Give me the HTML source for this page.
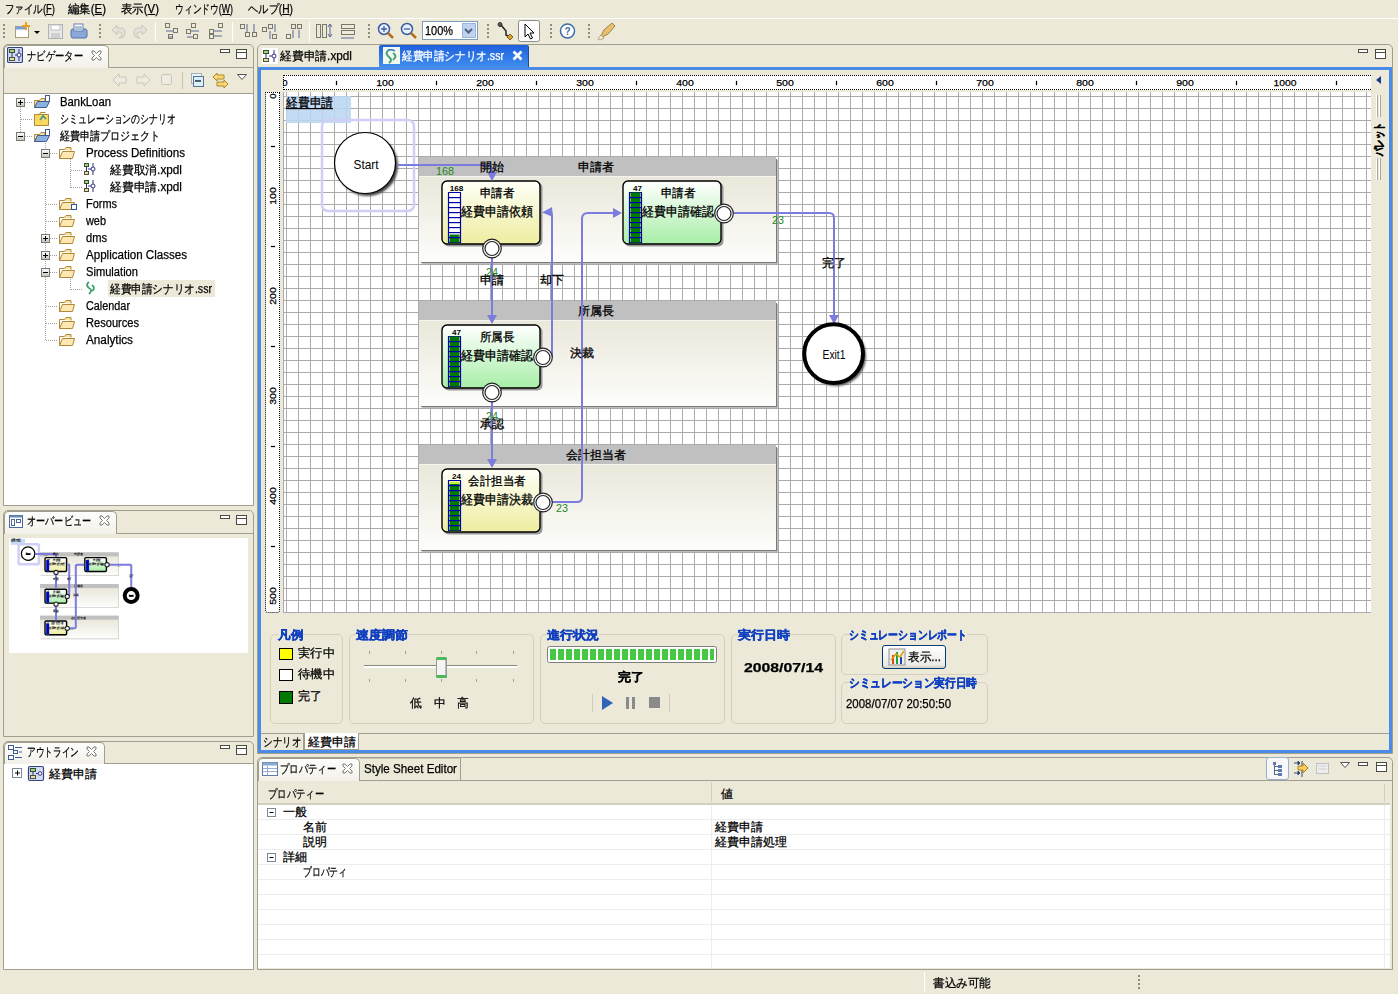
<!DOCTYPE html><html lang="ja"><head>
<meta charset="utf-8">
<style>
*{box-sizing:border-box;margin:0;padding:0}
html,body{width:1398px;height:994px;overflow:hidden;background:#ECE9D8;font-family:"Liberation Sans",sans-serif;font-size:12px;color:#000}
.a{position:absolute}
.t{position:absolute;white-space:nowrap;line-height:12px;height:12px;-webkit-text-stroke-width:0.25px}
.t>span{display:inline-block;transform-origin:0 0}
.panel{position:absolute;border:1px solid #A09F8F;border-radius:5px 5px 0 0;background:#ECE9D8}
.vtab{position:absolute;border:1px solid #A09F8F;border-bottom:none;border-radius:5px 5px 0 0;background:linear-gradient(#FDFDFB,#F3F1E9)}
.sep{position:absolute;width:1px;background:#C5C2B2;border-right:1px solid #fff}
.grip{position:absolute;width:2px;background:repeating-linear-gradient(#8F8C7E 0 2px,transparent 2px 4px)}
.wh{position:absolute;background:#fff}
.mn{position:absolute;width:10px;height:4px;border:1px solid #4A4A40;background:#fff}
.mx{position:absolute;width:11px;height:10px;border:1px solid #4A4A40;background:#fff;box-shadow:inset 0 2px 0 #fff,inset 0 3px 0 #4A4A40}
.gb{position:absolute;border:1px solid #D3D0C0;border-radius:5px}
.gt{color:#1040C0;font-weight:bold;background:#ECE9D8;-webkit-text-stroke-width:0.4px}
.row{position:absolute;left:0;width:100%;height:1px;background:#EDEDED}
</style>
</head>
<body>
<!-- ===== MENU ===== -->
<div class="a" style="left:0;top:18px;width:1398px;height:1px;background:#fff"></div>
<div class="t" style="left:5px;top:3px;width:50px"><span style="transform: scaleX(0.7893);">ファイル(<u>F</u>)</span></div>
<div class="t" style="left:68px;top:3px;width:38px"><span style="transform: scaleX(0.9496);">編集(<u>E</u>)</span></div>
<div class="t" style="left:121px;top:3px;width:38px"><span style="transform: scaleX(0.9496);">表示(<u>V</u>)</span></div>
<div class="t" style="left:175px;top:3px;width:58px"><span style="transform: scaleX(0.7311);">ウィンドウ(<u>W</u>)</span></div>
<div class="t" style="left:248px;top:3px;width:45px"><span style="transform: scaleX(0.8543);">ヘルプ(<u>H</u>)</span></div>

<!-- ===== TOOLBAR ===== -->
<div class="grip" style="left:3px;top:24px;height:14px"></div>
<svg class="a" style="left:0;top:19px" width="640" height="25" viewBox="0 19 640 25">
 <!-- new -->
 <rect x="15.5" y="26.5" width="13" height="11" fill="#fff" stroke="#A8A070"></rect>
 <rect x="15.5" y="26.5" width="10" height="3" fill="#7AA0E0" stroke="none"></rect>
 <path d="M26 22 v8 M22 26 h8" stroke="#E8A020" stroke-width="2"></path>
 <path d="M34 31 h6 l-3 3z" fill="#000"></path>
 <!-- save disabled -->
 <rect x="48.5" y="24.5" width="14" height="14" fill="#E8E8E8" stroke="#B0B0B0"></rect>
 <rect x="51" y="25" width="9" height="5" fill="#fff" stroke="#C0C0C0"></rect>
 <rect x="51" y="33" width="9" height="5" fill="#D0D0D0"></rect>
 <!-- print -->
 <rect x="71" y="29" width="16" height="9" rx="2" fill="#8AA8D8" stroke="#5070A8"></rect>
 <rect x="74" y="24" width="9" height="7" fill="#fff" stroke="#6080B0"></rect>
 <path d="M75 27h7M75 29h7" stroke="#6080B0"></path>
 <!-- undo/redo disabled -->
 <path d="M112 30 l5-5 v3 h4 q4 0 4 5 q0 4-4 5 h-2 q3-1 3-4 q0-2-3-2 h-2 v3z" fill="#E4E2D8" stroke="#C8C6BC"></path>
 <path d="M147 30 l-5-5 v3 h-4 q-4 0-4 5 q0 4 4 5 h2 q-3-1-3-4 q0-2 3-2 h2 v3z" fill="#E4E2D8" stroke="#C8C6BC"></path>
</svg>
<div class="grip" style="left:99px;top:24px;height:14px"></div>
<div class="sep" style="left:155px;top:22px;height:20px"></div>
<div class="sep" style="left:232px;top:22px;height:20px"></div>
<div class="sep" style="left:309px;top:22px;height:20px"></div>
<svg class="a" style="left:160px;top:19px" width="210" height="25" viewBox="160 19 210 25">
 <g fill="none" stroke="#7A786C" stroke-width="1">
 <!-- align icons group 1 -->
 <rect x="165.5" y="23.5" width="4" height="4"></rect><rect x="173.5" y="28.5" width="4" height="4"></rect><rect x="168.5" y="34.5" width="4" height="4"></rect>
 <path d="M166 31h7M169 37h4" stroke="#5A6898"></path>
 <rect x="191.5" y="23.5" width="4" height="4"></rect><rect x="186.5" y="29.5" width="4" height="4"></rect><rect x="193.5" y="34.5" width="4" height="4"></rect>
 <path d="M191 31h8M187 37h6" stroke="#5A6898"></path>
 <rect x="218.5" y="23.5" width="4" height="4"></rect><rect x="209.5" y="29.5" width="4" height="4"></rect><rect x="209.5" y="34.5" width="4" height="4"></rect>
 <path d="M214 31h8M214 36h8" stroke="#5A6898"></path>
 <!-- group 2 -->
 <rect x="240.5" y="24.5" width="4" height="4"></rect><rect x="245.5" y="32.5" width="4" height="4"></rect><rect x="252.5" y="32.5" width="4" height="4"></rect>
 <path d="M247 24v8M254 24v8" stroke="#5A6898"></path>
 <rect x="262.5" y="27.5" width="4" height="4"></rect><rect x="268.5" y="24.5" width="4" height="4"></rect><rect x="272.5" y="34.5" width="4" height="4"></rect>
 <path d="M270 31v8M275 24v8" stroke="#5A6898"></path>
 <rect x="286.5" y="34.5" width="4" height="4"></rect><rect x="291.5" y="24.5" width="4" height="4"></rect><rect x="297.5" y="24.5" width="4" height="4"></rect>
 <path d="M293 30v8M299 30v8" stroke="#5A6898"></path>
 <!-- group 3 -->
 <rect x="316.5" y="24.5" width="4" height="13"></rect><rect x="322.5" y="24.5" width="4" height="13"></rect>
 <path d="M330 24v13M328 27l2-3 2 3M328 34l2 3 2-3" stroke="#5A6898"></path>
 <rect x="341.5" y="24.5" width="13" height="4"></rect><rect x="341.5" y="30.5" width="13" height="4"></rect>
 <path d="M341 38h13" stroke="#5A6898"></path>
 </g>
</svg>
<div class="grip" style="left:368px;top:24px;height:14px"></div>
<svg class="a" style="left:370px;top:19px" width="270" height="25" viewBox="370 19 270 25">
 <!-- zoom in -->
 <circle cx="384" cy="29" r="5.5" fill="#E8F0FF" stroke="#3A5AA0" stroke-width="1.5"></circle>
 <path d="M381 29h6M384 26v6" stroke="#3A5AA0" stroke-width="1.3"></path>
 <path d="M388 33l5 5" stroke="#B07020" stroke-width="2.5"></path>
 <!-- zoom out -->
 <circle cx="407" cy="29" r="5.5" fill="#E8F0FF" stroke="#3A5AA0" stroke-width="1.5"></circle>
 <path d="M404 29h6" stroke="#3A5AA0" stroke-width="1.3"></path>
 <path d="M411 33l5 5" stroke="#B07020" stroke-width="2.5"></path>
 <!-- combo -->
 <rect x="422.5" y="21.5" width="55" height="18" fill="#fff" stroke="#7F9DB9"></rect>
 <rect x="462.5" y="23.5" width="13" height="14" fill="#C1D2EE" stroke="#98B4E0"></rect>
 <path d="M465 29l3.5 3.5 3.5-3.5" stroke="#4D6185" stroke-width="2" fill="none"></path>
 <!-- connection tool -->
 <circle cx="500" cy="24.5" r="2" fill="#555" stroke="#333"></circle>
 <path d="M501 25l5 6v4l5 3" stroke="#222" stroke-width="1.5" fill="none"></path>
 <path d="M510 34l3 3-3 3-3-3z" fill="#D8A030" stroke="#806020"></path>
 <!-- select pressed -->
 <rect x="518.5" y="20.5" width="21" height="21" rx="2" fill="#FCFCFC" stroke="#8C8C8C"></rect>
 <path d="M525 24v13l3-3 2.5 5 2-1-2.5-5h4z" fill="#fff" stroke="#000"></path>
 <!-- help -->
 <circle cx="567.5" cy="31" r="7" fill="#fff" stroke="#3E6CA8" stroke-width="1.5"></circle>
 <text x="567.5" y="35" font-size="10" font-weight="bold" text-anchor="middle" fill="#3E6CA8" font-family="Liberation Sans">?</text>
 <!-- flashlight -->
 <path d="M600 38l4-8 8-7 3 3-7 8z" fill="#E8C070" stroke="#A08040"></path>
 <path d="M598 39l3-4 3 3-4 2z" fill="#F8F0E0" stroke="#B0A080"></path>
</svg>
<div class="t" style="left:425px;top:25px;width:28px"><span style="transform: scaleX(0.912);">100%</span></div>
<div class="grip" style="left:487px;top:24px;height:14px"></div>
<div class="grip" style="left:550px;top:24px;height:14px"></div>
<div class="grip" style="left:588px;top:24px;height:14px"></div>
<!-- ===== NAVIGATOR ===== -->
<div class="panel" style="left:3px;top:44px;width:251px;height:462px"></div>
<div class="a" style="left:4px;top:67px;width:249px;height:1px;background:#A09F8F"></div>
<div class="vtab" style="left:4px;top:45px;width:105px;height:23px;border-color:#A09F8F"></div>
<div class="a" style="left:5px;top:66px;width:103px;height:2px;background:#F3F1E9"></div>
<svg class="a" style="left:7px;top:47px" width="16" height="17" viewBox="0 0 16 17">
 <rect x="0.5" y="0.5" width="15" height="15" rx="1.5" fill="#D4DCF4" stroke="#34427E" stroke-width="1.2"></rect>
 <rect x="2.5" y="2.5" width="5" height="3" fill="#A8D080" stroke="#305030"></rect>
 <rect x="2.5" y="10.5" width="5" height="3" fill="#E0E0B0" stroke="#505030"></rect>
 <path d="M5 6v4M8 8h3" stroke="#303080"></path>
 <circle cx="12" cy="8" r="2" fill="#fff" stroke="#303080"></circle>
 <path d="M12 2v4M12 10v4" stroke="#303080"></path>
</svg>
<div class="t" style="left:27px;top:50px;width:56px"><span style="transform: scaleX(0.7778);">ナビゲーター</span></div>
<svg class="a" style="left:91px;top:50px" width="11" height="11" viewBox="0 0 11 11"><path d="M1 1l2-0 2.5 2.5 2.5-2.5 2 0 0 2-2.5 2.5 2.5 2.5 0 2-2 0-2.5-2.5-2.5 2.5-2 0 0-2 2.5-2.5-2.5-2.5z" fill="#fff" stroke="#777"></path></svg>
<div class="mn" style="left:220px;top:49px"></div>
<div class="mx" style="left:236px;top:49px"></div>
<!-- view toolbar -->
<svg class="a" style="left:110px;top:70px" width="140" height="20" viewBox="110 70 140 20">
 <path d="M113 80l6-6v3h7v6h-7v3z" fill="#EDEBE2" stroke="#C9C6B8"></path>
 <path d="M150 80l-6-6v3h-7v6h7v3z" fill="#EDEBE2" stroke="#C9C6B8"></path>
 <rect x="161.5" y="74.5" width="10" height="10" rx="2" fill="#EDEBE2" stroke="#C9C6B8"></rect>
 <path d="M182.5 72v17" stroke="#C5C2B2"></path>
 <rect x="191.5" y="73.5" width="10" height="10" fill="#E8F4FC" stroke="#A0B0C0"></rect>
 <rect x="193.5" y="76.5" width="10" height="10" fill="#D8F0FC" stroke="#5A7090"></rect>
 <path d="M195 81h6" stroke="#203040" stroke-width="1.5"></path>
 <path d="M213 77l4-4v2h7v4h-7v2z" fill="#F8D878" stroke="#B08820"></path>
 <path d="M228 84l-4-4v2h-7v4h7v2z" fill="#F8D878" stroke="#B08820"></path>
 <path d="M237.5 74.5h9l-4.5 5z" fill="#fff" stroke="#555"></path>
</svg>
<div class="wh" style="left:4px;top:93px;width:249px;height:412px;border-top:1px solid #A09F8F"></div>
<!-- tree lines -->
<svg class="a" style="left:4px;top:93px" width="249" height="260" viewBox="4 93 249 260">
 <defs><linearGradient id="expg" x1="0" y1="0" x2="0" y2="1"><stop offset="0" stop-color="#fff"></stop><stop offset="1" stop-color="#C4C4BC"></stop></linearGradient></defs>
 <g stroke="#A0A0A0" stroke-dasharray="1 1" fill="none"><path d="
M20.5 107V132M25 102.5h8M21 119.5h12M25 136.5h8M45.5 141V341.0M50 153.5h8M46 204.5h12M46 221.5h12M50 238.5h8M50 255.5h8M50 272.5h8M46 306.5h12M46 323.5h12M46 340.5h12M70.5 159V188.0M71 170.5h12M71 187.5h12M70.5 277V290.0M71 289.5h12"></path></g>
 <g fill="url(#expg)" stroke="#7A7A72">
  <rect x="16.5" y="98.5" width="8" height="8"></rect>
  <rect x="16.5" y="132.5" width="8" height="8"></rect>
  <rect x="41.5" y="149.5" width="8" height="8"></rect>
  <rect x="41.5" y="234.5" width="8" height="8"></rect>
  <rect x="41.5" y="251.5" width="8" height="8"></rect>
  <rect x="41.5" y="268.5" width="8" height="8"></rect>
 </g>
 <g fill="#000">
  <rect x="18" y="102" width="5" height="1"></rect>
  <rect x="20" y="100" width="1" height="5"></rect>
  <rect x="18" y="136" width="5" height="1"></rect>
  <rect x="43" y="153" width="5" height="1"></rect>
  <rect x="43" y="238" width="5" height="1"></rect>
  <rect x="45" y="236" width="1" height="5"></rect>
  <rect x="43" y="255" width="5" height="1"></rect>
  <rect x="45" y="253" width="1" height="5"></rect>
  <rect x="43" y="272" width="5" height="1"></rect>
 </g>
</svg>
<!-- selection highlight -->
<div class="a" style="left:108px;top:280px;width:107px;height:17px;background:#ECE9D8"></div>
<!-- tree icons -->
<svg class="a" style="left:4px;top:93px" width="249" height="260" viewBox="4 93 249 260">
 <defs>
  <g id="fold"><path d="M0.5 3.5h5l1.5-2h5v3" fill="#F8E0A0" stroke="#B08838"></path><path d="M0.5 3.5v9h13l2-7h-12l-3 7" fill="#FCE8B0" stroke="#B08838"></path></g>
  <g id="proj"><path d="M0.5 5.5h5l1.5-2h4v9h-10.5z" fill="#F8E0A0" stroke="#B08838"></path><path d="M0.5 12.5l3-6h12l-3 6z" fill="#8CB0E0" stroke="#405C90"></path><rect x="11.5" y="0.5" width="4" height="6" fill="#fff" stroke="#405C90"></rect></g>
  <g id="xpdl"><rect x="0.5" y="1.5" width="4" height="3" fill="#A8D080" stroke="#305030"></rect><rect x="0.5" y="9.5" width="4" height="3" fill="#E0E0B0" stroke="#505030"></rect><path d="M2.5 5v4M4 7h4" stroke="#303080"></path><circle cx="9" cy="7" r="2" fill="#fff" stroke="#303080"></circle><path d="M9 1v4M9 9v4" stroke="#303080"></path></g>
 </defs>
 <use href="#proj" x="34" y="95"></use>
 <g transform="translate(34 111)"><path d="M0.5 3.5h14v11h-14z" fill="#F8D860" stroke="#B08838"></path><path d="M0.5 3.5h5l1-2h5" fill="#F8E0A0" stroke="#B08838"></path><path d="M6 9l3-4 3 3" stroke="#409090" fill="none" stroke-width="1.5"></path></g>
 <use href="#proj" x="34" y="129"></use>
 <use href="#fold" x="59" y="146"></use>
 <use href="#xpdl" x="84" y="162"></use>
 <use href="#xpdl" x="84" y="179"></use>
 <use href="#fold" x="59" y="197"></use>
 <rect x="71.5" y="204.5" width="5" height="5" fill="#fff" stroke="#3050A0"></rect>
 <use href="#fold" x="59" y="214"></use>
 <use href="#fold" x="59" y="231"></use>
 <use href="#fold" x="59" y="248"></use>
 <use href="#fold" x="59" y="265"></use>
 <path d="M89 282q-4 3 0 6q4 2 0 6M92 285q4 3 0 6" stroke="#40A070" fill="none" stroke-width="1.8"></path>
 <use href="#fold" x="59" y="299"></use>
 <use href="#fold" x="59" y="316"></use>
 <use href="#fold" x="59" y="333"></use>
</svg>
<div class="t" style="left:60px;top:96px;width:51px"><span style="transform: scaleX(0.9436);">BankLoan</span></div>
<div class="t" style="left:60px;top:113px;width:116px"><span style="transform: scaleX(0.7436);">シミュレーションのシナリオ</span></div>
<div class="t" style="left:60px;top:130px;width:100px"><span style="transform: scaleX(0.8333);">経費申請プロジェクト</span></div>
<div class="t" style="left:86px;top:147px;width:99px"><span style="transform: scaleX(0.9638);">Process Definitions</span></div>
<div class="t" style="left:110px;top:164px;width:72px"><span style="transform: scaleX(0.9815);">経費取消.xpdl</span></div>
<div class="t" style="left:110px;top:181px;width:72px"><span style="transform: scaleX(0.9815);">経費申請.xpdl</span></div>
<div class="t" style="left:86px;top:198px;width:31px"><span style="transform: scaleX(0.9118);">Forms</span></div>
<div class="t" style="left:86px;top:215px;width:20px"><span style="transform: scaleX(0.9084);">web</span></div>
<div class="t" style="left:86px;top:232px;width:21px"><span style="transform: scaleX(0.9263);">dms</span></div>
<div class="t" style="left:86px;top:249px;width:101px"><span style="transform: scaleX(0.9645);">Application Classes</span></div>
<div class="t" style="left:86px;top:266px;width:52px"><span style="transform: scaleX(0.9281);">Simulation</span></div>
<div class="t" style="left:110px;top:283px;width:102px"><span style="transform: scaleX(0.8843);">経費申請シナリオ.ssr</span></div>
<div class="t" style="left:86px;top:300px;width:44px"><span style="transform: scaleX(0.9034);">Calendar</span></div>
<div class="t" style="left:86px;top:317px;width:53px"><span style="transform: scaleX(0.924);">Resources</span></div>
<div class="t" style="left:86px;top:334px;width:47px"><span style="transform: scaleX(0.9785);">Analytics</span></div>
<!-- ===== OVERVIEW ===== -->
<div class="panel" style="left:3px;top:510px;width:251px;height:227px"></div>
<div class="a" style="left:4px;top:533px;width:249px;height:1px;background:#A09F8F"></div>
<div class="vtab" style="left:4px;top:511px;width:113px;height:23px"></div>
<div class="a" style="left:5px;top:532px;width:111px;height:2px;background:#F3F1E9"></div>
<svg class="a" style="left:9px;top:515px" width="14" height="13" viewBox="0 0 14 13">
 <rect x="0.5" y="0.5" width="13" height="12" fill="#fff" stroke="#4A6A9A"></rect>
 <rect x="0.5" y="0.5" width="13" height="2" fill="#6A8ABA"></rect>
 <rect x="2.5" y="4.5" width="3" height="6" fill="none" stroke="#4A6A9A"></rect>
 <rect x="7.5" y="4.5" width="4" height="3" fill="none" stroke="#4A6A9A"></rect>
</svg>
<div class="t" style="left:27px;top:515px;width:64px"><span style="transform: scaleX(0.7619);">オーバービュー</span></div>
<svg class="a" style="left:99px;top:515px" width="11" height="11" viewBox="0 0 11 11"><path d="M1 1l2-0 2.5 2.5 2.5-2.5 2 0 0 2-2.5 2.5 2.5 2.5 0 2-2 0-2.5-2.5-2.5 2.5-2 0 0-2 2.5-2.5-2.5-2.5z" fill="#fff" stroke="#777"></path></svg>
<div class="mn" style="left:220px;top:515px"></div>
<div class="mx" style="left:236px;top:515px"></div>
<div class="wh" style="left:9px;top:538px;width:239px;height:115px"></div>
<svg class="a" style="left:9px;top:538px" width="239" height="115" viewBox="9 538 239 115" id="ovsvg">
 <g transform="translate(10.7 538.9) scale(0.22) translate(-286 -96)">
  <use href="#diagram"></use>
  <g fill="#0000C8"><rect x="448" y="192" width="12" height="50"></rect><rect x="629" y="192" width="12" height="50"></rect><rect x="448" y="336" width="12" height="50"></rect><rect x="448" y="480" width="12" height="50"></rect></g>
  <path d="M355 165h20M824 355h20" stroke="#000" stroke-width="8"></path>
 </g>
</svg>

<!-- ===== OUTLINE ===== -->
<div class="panel" style="left:3px;top:741px;width:251px;height:229px"></div>
<div class="a" style="left:4px;top:763px;width:249px;height:1px;background:#A09F8F"></div>
<div class="vtab" style="left:4px;top:742px;width:101px;height:22px"></div>
<div class="a" style="left:5px;top:762px;width:99px;height:2px;background:#F3F1E9"></div>
<svg class="a" style="left:8px;top:745px" width="15" height="15" viewBox="0 0 15 15">
 <rect x="0.5" y="0.5" width="5" height="4" fill="#fff" stroke="#3A5A9A"></rect>
 <rect x="5.5" y="5.5" width="4" height="3" fill="#fff" stroke="#3A5A9A"></rect>
 <rect x="0.5" y="10.5" width="5" height="4" fill="#fff" stroke="#3A5A9A"></rect>
 <path d="M7 2.5h7M11 7h3M7 12.5h7" stroke="#3A5A9A"></path>
</svg>
<div class="t" style="left:27px;top:746px;width:52px"><span style="transform: scaleX(0.7222);">アウトライン</span></div>
<svg class="a" style="left:86px;top:746px" width="11" height="11" viewBox="0 0 11 11"><path d="M1 1l2-0 2.5 2.5 2.5-2.5 2 0 0 2-2.5 2.5 2.5 2.5 0 2-2 0-2.5-2.5-2.5 2.5-2 0 0-2 2.5-2.5-2.5-2.5z" fill="#fff" stroke="#777"></path></svg>
<div class="mn" style="left:220px;top:745px"></div>
<div class="mx" style="left:236px;top:745px"></div>
<div class="wh" style="left:4px;top:764px;width:249px;height:205px"></div>
<svg class="a" style="left:10px;top:765px" width="40" height="18" viewBox="10 765 40 18">
 <rect x="12.5" y="768.5" width="9" height="9" fill="#fff" stroke="#7A8A99"></rect>
 <path d="M15 773h5M17.5 770.5v5" stroke="#000"></path>
 <rect x="28.5" y="766.5" width="15" height="14" rx="1.5" fill="#D4DCF4" stroke="#34427E" stroke-width="1.2"></rect>
 <rect x="30.5" y="768.5" width="5" height="3" fill="#A8D080" stroke="#305030"></rect>
 <rect x="30.5" y="775.5" width="5" height="3" fill="#E0E0B0" stroke="#505030"></rect>
 <path d="M33 772v3M36 773.5h3" stroke="#303080"></path>
 <circle cx="40" cy="773.5" r="1.8" fill="#fff" stroke="#303080"></circle>
</svg>
<div class="t" style="left:49px;top:768px;width:48px"><span style="transform: scaleX(1);">経費申請</span></div>
<!-- ===== EDITOR ===== -->
<div class="panel" style="left:257px;top:44px;width:1136px;height:710px"></div>

<div class="a" style="left:379px;top:45px;width:150px;height:23px;border-radius:2px 2px 0 0;background:linear-gradient(#1E5FDC,#3A86EC 80%,#4A90EE);border-right:1px solid #1A4AA0"></div>
<svg class="a" style="left:262px;top:48px" width="16" height="16" viewBox="0 0 16 16">
 <rect x="0" y="0" width="16" height="16" fill="#fff"></rect>
 <rect x="1.5" y="2.5" width="5" height="3" fill="#A8D080" stroke="#305030"></rect><rect x="1.5" y="10.5" width="5" height="3" fill="#E0E0B0" stroke="#505030"></rect>
 <path d="M4 6v4M7 8h3" stroke="#303080"></path><circle cx="12" cy="8" r="2" fill="#fff" stroke="#303080"></circle><path d="M12 2v4M12 10v4" stroke="#303080"></path>
</svg>
<div class="t" style="left:280px;top:50px;width:72px"><span style="transform: scaleX(0.9815);">経費申請.xpdl</span></div>
<svg class="a" style="left:383px;top:47px" width="17" height="17" viewBox="0 0 17 17">
 <rect x="0" y="0" width="17" height="17" fill="#F0F8F0"></rect>
 <path d="M6 3q-5 3 0 7q4 3 0 6M10 6q5 3 0 7" stroke="#40A070" fill="none" stroke-width="2"></path>
 <path d="M5 3q4-1 7 1" stroke="#3070C0" fill="none" stroke-width="1.5"></path>
</svg>
<div class="t" style="left:402px;top:50px;width:102px;color:#fff"><span style="transform: scaleX(0.8843);">経費申請シナリオ.ssr</span></div>
<svg class="a" style="left:512px;top:50px" width="11" height="11" viewBox="0 0 11 11"><path d="M1.5 1.5l8 8M9.5 1.5l-8 8" stroke="#fff" stroke-width="2.6"></path></svg>
<div class="mn" style="left:1358px;top:49px"></div>
<div class="mx" style="left:1375px;top:49px"></div>
<!-- blue frame -->
<div class="a" style="left:258px;top:67px;width:1134px;height:686px;border:3px solid #4A8BE8;border-top-width:3px;background:#ECE9D8"></div>
<!-- rulers -->
<div class="wh" style="left:283px;top:75px;width:1088px;height:15px;border-top:1px dotted #000;border-bottom:1px dotted #000;border-left:1px dotted #000"></div>
<div class="wh" style="left:265px;top:92px;width:15px;height:521px;border-left:1px dotted #000;border-right:1px dotted #000;border-top:1px dotted #000;border-bottom:1px dotted #000;border-radius:0 0 3px 3px"></div>
<!-- canvas -->
<div class="a" style="left:283px;top:92px;width:1088px;height:521px;background-color:#fff;background-image:linear-gradient(90deg,#ABABAB 1px,transparent 1px),linear-gradient(#ABABAB 1px,transparent 1px);background-size:12px 12px;background-position:2px 4px;border-left:1px solid #ABABAB;border-bottom:1px solid #ABABAB"></div>
<svg class="a" style="left:283px;top:76px" width="1088" height="14" viewBox="283 76 1088 14"><g font-family="Liberation Sans" font-size="9.5" text-anchor="middle" fill="#000" stroke="#000" stroke-width="0.25">
<text x="285" y="86">0</text>
<text x="385" y="86" textLength="17.5" lengthAdjust="spacingAndGlyphs">100</text>
<text x="485" y="86" textLength="17.5" lengthAdjust="spacingAndGlyphs">200</text>
<text x="585" y="86" textLength="17.5" lengthAdjust="spacingAndGlyphs">300</text>
<text x="685" y="86" textLength="17.5" lengthAdjust="spacingAndGlyphs">400</text>
<text x="785" y="86" textLength="17.5" lengthAdjust="spacingAndGlyphs">500</text>
<text x="885" y="86" textLength="17.5" lengthAdjust="spacingAndGlyphs">600</text>
<text x="985" y="86" textLength="17.5" lengthAdjust="spacingAndGlyphs">700</text>
<text x="1085" y="86" textLength="17.5" lengthAdjust="spacingAndGlyphs">800</text>
<text x="1185" y="86" textLength="17.5" lengthAdjust="spacingAndGlyphs">900</text>
<text x="1285" y="86" textLength="23" lengthAdjust="spacingAndGlyphs">1000</text>
<rect x="336" y="81" width="1" height="4"></rect>
<rect x="436" y="81" width="1" height="4"></rect>
<rect x="536" y="81" width="1" height="4"></rect>
<rect x="636" y="81" width="1" height="4"></rect>
<rect x="736" y="81" width="1" height="4"></rect>
<rect x="836" y="81" width="1" height="4"></rect>
<rect x="936" y="81" width="1" height="4"></rect>
<rect x="1036" y="81" width="1" height="4"></rect>
<rect x="1136" y="81" width="1" height="4"></rect>
<rect x="1236" y="81" width="1" height="4"></rect>
<rect x="1336" y="81" width="1" height="4"></rect>
</g></svg>
<svg class="a" style="left:266px;top:93px" width="14" height="520" viewBox="266 93 14 520"><g font-family="Liberation Sans" font-size="9.5" text-anchor="middle" fill="#000" stroke="#000" stroke-width="0.25">
<text transform="translate(276 96) rotate(-90)" x="0" y="0">0</text>
<text transform="translate(276 196) rotate(-90)" x="0" y="0" textLength="17.5" lengthAdjust="spacingAndGlyphs">100</text>
<text transform="translate(276 296) rotate(-90)" x="0" y="0" textLength="17.5" lengthAdjust="spacingAndGlyphs">200</text>
<text transform="translate(276 396) rotate(-90)" x="0" y="0" textLength="17.5" lengthAdjust="spacingAndGlyphs">300</text>
<text transform="translate(276 496) rotate(-90)" x="0" y="0" textLength="17.5" lengthAdjust="spacingAndGlyphs">400</text>
<text transform="translate(276 596) rotate(-90)" x="0" y="0" textLength="17.5" lengthAdjust="spacingAndGlyphs">500</text>
<rect x="271" y="146" width="4" height="1"></rect>
<rect x="271" y="246" width="4" height="1"></rect>
<rect x="271" y="346" width="4" height="1"></rect>
<rect x="271" y="446" width="4" height="1"></rect>
<rect x="271" y="546" width="4" height="1"></rect>
<rect x="271" y="646" width="4" height="1"></rect>
</g></svg>
<svg class="a" style="left:283px;top:92px" width="1088" height="521" viewBox="283 92 1088 521">
<defs>
<linearGradient id="lane" x1="0" y1="0" x2="0" y2="1"><stop offset="0" stop-color="#E6E3D3"></stop><stop offset="1" stop-color="#FDFDFB"></stop></linearGradient>
<linearGradient id="yel" x1="0" y1="0" x2="0" y2="1"><stop offset="0" stop-color="#FFFFF8"></stop><stop offset="1" stop-color="#EDEDA0"></stop></linearGradient>
<linearGradient id="grn" x1="0" y1="0" x2="0" y2="1"><stop offset="0" stop-color="#FFFFFF"></stop><stop offset="1" stop-color="#A8EEA8"></stop></linearGradient>
<filter id="blur1" x="-20%" y="-20%" width="140%" height="140%"><feGaussianBlur stdDeviation="1"></feGaussianBlur></filter><filter id="blur05" x="-20%" y="-20%" width="140%" height="140%"><feGaussianBlur stdDeviation="0.6"></feGaussianBlur></filter>
</defs>
<g id="diagram" stroke-linejoin="round">
<rect x="286" y="96" width="65" height="27" fill="#BCD6F2" fill-opacity="0.88"></rect>
<text stroke="#000" stroke-width="0.3" x="286" y="107" font-size="12.5" font-family="Liberation Sans" textLength="47" lengthAdjust="spacingAndGlyphs">経費申請</text>
<rect x="286" y="108" width="47" height="1.2" fill="#000"></rect>
<rect x="322" y="120" width="92" height="91" rx="6" fill="none" stroke="#CFCFF6" stroke-width="2.5" vector-effect="non-scaling-stroke"></rect>
<circle cx="367.5" cy="165.5" r="30.5" fill="#444" filter="url(#blur1)"></circle>
<circle cx="365" cy="163" r="30.5" fill="#fff" stroke="#000" stroke-width="1.2" vector-effect="non-scaling-stroke"></circle>
<text x="366" y="169" font-size="12" font-family="Liberation Sans" text-anchor="middle" textLength="25" lengthAdjust="spacingAndGlyphs">Start</text>
<rect x="419" y="157" width="357" height="105" fill="url(#lane)"></rect>
<rect x="776" y="159" width="1" height="104" fill="#7A7A7A"></rect><rect x="421" y="262" width="356" height="1" fill="#7A7A7A"></rect>
<rect x="777" y="160" width="1" height="104" fill="#BDBDBD"></rect><rect x="422" y="263" width="356" height="1" fill="#BDBDBD"></rect>
<rect x="419" y="157" width="357" height="19" fill="#C0C0C0"></rect>
<rect x="419" y="176" width="357" height="1" fill="#F4F4F0"></rect>
<text stroke="#000" stroke-width="0.3" x="596" y="171" font-size="12" font-family="Liberation Sans" text-anchor="middle">申請者</text>
<rect x="419" y="301" width="357" height="105" fill="url(#lane)"></rect>
<rect x="776" y="303" width="1" height="104" fill="#7A7A7A"></rect><rect x="421" y="406" width="356" height="1" fill="#7A7A7A"></rect>
<rect x="777" y="304" width="1" height="104" fill="#BDBDBD"></rect><rect x="422" y="407" width="356" height="1" fill="#BDBDBD"></rect>
<rect x="419" y="301" width="357" height="19" fill="#C0C0C0"></rect>
<rect x="419" y="320" width="357" height="1" fill="#F4F4F0"></rect>
<text stroke="#000" stroke-width="0.3" x="596" y="315" font-size="12" font-family="Liberation Sans" text-anchor="middle">所属長</text>
<rect x="419" y="445" width="357" height="105" fill="url(#lane)"></rect>
<rect x="776" y="447" width="1" height="104" fill="#7A7A7A"></rect><rect x="421" y="550" width="356" height="1" fill="#7A7A7A"></rect>
<rect x="777" y="448" width="1" height="104" fill="#BDBDBD"></rect><rect x="422" y="551" width="356" height="1" fill="#BDBDBD"></rect>
<rect x="419" y="445" width="357" height="19" fill="#C0C0C0"></rect>
<rect x="419" y="464" width="357" height="1" fill="#F4F4F0"></rect>
<text stroke="#000" stroke-width="0.3" x="596" y="459" font-size="12" font-family="Liberation Sans" text-anchor="middle">会計担当者</text>
<rect x="443.5" y="182.5" width="99" height="64" rx="5" fill="#9A9A9A" filter="url(#blur05)"></rect>
<rect x="442" y="181" width="98" height="63" rx="5" fill="url(#yel)" stroke="#000" stroke-width="1.4" vector-effect="non-scaling-stroke"></rect>
<rect x="448.5" y="192.5" width="12" height="50" fill="#fff" stroke="#0000A8" stroke-width="1.2"></rect>
<rect x="449.5" y="234.5" width="10" height="8.0" fill="#007A00"></rect>
<rect x="448.5" y="197.0" width="12" height="1.2" fill="#0000A8"></rect>
<rect x="448.5" y="202.0" width="12" height="1.2" fill="#0000A8"></rect>
<rect x="448.5" y="207.0" width="12" height="1.2" fill="#0000A8"></rect>
<rect x="448.5" y="212.0" width="12" height="1.2" fill="#0000A8"></rect>
<rect x="448.5" y="217.0" width="12" height="1.2" fill="#0000A8"></rect>
<rect x="448.5" y="222.0" width="12" height="1.2" fill="#0000A8"></rect>
<rect x="448.5" y="227.0" width="12" height="1.2" fill="#0000A8"></rect>
<rect x="448.5" y="232.0" width="12" height="1.2" fill="#0000A8"></rect>
<rect x="448.5" y="237.0" width="12" height="1.2" fill="#0000A8"></rect>
<text x="456.5" y="190.5" font-size="8" font-weight="bold" font-family="Liberation Sans" text-anchor="middle" textLength="13.5" lengthAdjust="spacingAndGlyphs">168</text>
<text stroke="#000" stroke-width="0.3" x="497" y="196.5" font-size="12" font-family="Liberation Sans" text-anchor="middle" textLength="34.5" lengthAdjust="spacingAndGlyphs">申請者</text>
<text stroke="#000" stroke-width="0.3" x="497" y="215.5" font-size="12.5" font-family="Liberation Sans" text-anchor="middle" textLength="72" lengthAdjust="spacingAndGlyphs">経費申請依頼</text>
<rect x="624.5" y="182.5" width="99" height="64" rx="5" fill="#9A9A9A" filter="url(#blur05)"></rect>
<rect x="623" y="181" width="98" height="63" rx="5" fill="url(#grn)" stroke="#000" stroke-width="1.4" vector-effect="non-scaling-stroke"></rect>
<rect x="629.5" y="192.5" width="12" height="50" fill="#fff" stroke="#0000A8" stroke-width="1.2"></rect>
<rect x="630.5" y="192.5" width="10" height="50" fill="#007A00"></rect>
<rect x="629.5" y="197.0" width="12" height="1.2" fill="#0000A8"></rect>
<rect x="629.5" y="202.0" width="12" height="1.2" fill="#0000A8"></rect>
<rect x="629.5" y="207.0" width="12" height="1.2" fill="#0000A8"></rect>
<rect x="629.5" y="212.0" width="12" height="1.2" fill="#0000A8"></rect>
<rect x="629.5" y="217.0" width="12" height="1.2" fill="#0000A8"></rect>
<rect x="629.5" y="222.0" width="12" height="1.2" fill="#0000A8"></rect>
<rect x="629.5" y="227.0" width="12" height="1.2" fill="#0000A8"></rect>
<rect x="629.5" y="232.0" width="12" height="1.2" fill="#0000A8"></rect>
<rect x="629.5" y="237.0" width="12" height="1.2" fill="#0000A8"></rect>
<text x="637.5" y="190.5" font-size="8" font-weight="bold" font-family="Liberation Sans" text-anchor="middle" textLength="9.0" lengthAdjust="spacingAndGlyphs">47</text>
<text stroke="#000" stroke-width="0.3" x="678" y="196.5" font-size="12" font-family="Liberation Sans" text-anchor="middle" textLength="34.5" lengthAdjust="spacingAndGlyphs">申請者</text>
<text stroke="#000" stroke-width="0.3" x="678" y="215.5" font-size="12.5" font-family="Liberation Sans" text-anchor="middle" textLength="72" lengthAdjust="spacingAndGlyphs">経費申請確認</text>
<rect x="443.5" y="326.5" width="99" height="64" rx="5" fill="#9A9A9A" filter="url(#blur05)"></rect>
<rect x="442" y="325" width="98" height="63" rx="5" fill="url(#grn)" stroke="#000" stroke-width="1.4" vector-effect="non-scaling-stroke"></rect>
<rect x="448.5" y="336.5" width="12" height="50" fill="#fff" stroke="#0000A8" stroke-width="1.2"></rect>
<rect x="449.5" y="336.5" width="10" height="50" fill="#007A00"></rect>
<rect x="448.5" y="341.0" width="12" height="1.2" fill="#0000A8"></rect>
<rect x="448.5" y="346.0" width="12" height="1.2" fill="#0000A8"></rect>
<rect x="448.5" y="351.0" width="12" height="1.2" fill="#0000A8"></rect>
<rect x="448.5" y="356.0" width="12" height="1.2" fill="#0000A8"></rect>
<rect x="448.5" y="361.0" width="12" height="1.2" fill="#0000A8"></rect>
<rect x="448.5" y="366.0" width="12" height="1.2" fill="#0000A8"></rect>
<rect x="448.5" y="371.0" width="12" height="1.2" fill="#0000A8"></rect>
<rect x="448.5" y="376.0" width="12" height="1.2" fill="#0000A8"></rect>
<rect x="448.5" y="381.0" width="12" height="1.2" fill="#0000A8"></rect>
<text x="456.5" y="334.5" font-size="8" font-weight="bold" font-family="Liberation Sans" text-anchor="middle" textLength="9.0" lengthAdjust="spacingAndGlyphs">47</text>
<text stroke="#000" stroke-width="0.3" x="497" y="340.5" font-size="12" font-family="Liberation Sans" text-anchor="middle" textLength="34.5" lengthAdjust="spacingAndGlyphs">所属長</text>
<text stroke="#000" stroke-width="0.3" x="497" y="359.5" font-size="12.5" font-family="Liberation Sans" text-anchor="middle" textLength="72" lengthAdjust="spacingAndGlyphs">経費申請確認</text>
<rect x="443.5" y="470.5" width="99" height="64" rx="5" fill="#9A9A9A" filter="url(#blur05)"></rect>
<rect x="442" y="469" width="98" height="63" rx="5" fill="url(#yel)" stroke="#000" stroke-width="1.4" vector-effect="non-scaling-stroke"></rect>
<rect x="448.5" y="480.5" width="12" height="50" fill="#fff" stroke="#0000A8" stroke-width="1.2"></rect>
<rect x="449.5" y="483.0" width="10" height="47.5" fill="#007A00"></rect>
<rect x="449.5" y="481.5" width="10" height="2.5" fill="#C8F040"></rect>
<rect x="448.5" y="485.0" width="12" height="1.2" fill="#0000A8"></rect>
<rect x="448.5" y="490.0" width="12" height="1.2" fill="#0000A8"></rect>
<rect x="448.5" y="495.0" width="12" height="1.2" fill="#0000A8"></rect>
<rect x="448.5" y="500.0" width="12" height="1.2" fill="#0000A8"></rect>
<rect x="448.5" y="505.0" width="12" height="1.2" fill="#0000A8"></rect>
<rect x="448.5" y="510.0" width="12" height="1.2" fill="#0000A8"></rect>
<rect x="448.5" y="515.0" width="12" height="1.2" fill="#0000A8"></rect>
<rect x="448.5" y="520.0" width="12" height="1.2" fill="#0000A8"></rect>
<rect x="448.5" y="525.0" width="12" height="1.2" fill="#0000A8"></rect>
<text x="456.5" y="478.5" font-size="8" font-weight="bold" font-family="Liberation Sans" text-anchor="middle" textLength="9.0" lengthAdjust="spacingAndGlyphs">24</text>
<text stroke="#000" stroke-width="0.3" x="497" y="484.5" font-size="12" font-family="Liberation Sans" text-anchor="middle" textLength="57.5" lengthAdjust="spacingAndGlyphs">会計担当者</text>
<text stroke="#000" stroke-width="0.3" x="497" y="503.5" font-size="12.5" font-family="Liberation Sans" text-anchor="middle" textLength="72" lengthAdjust="spacingAndGlyphs">経費申請決裁</text>
<path d="M398 165 H487 Q492 165 492 170 V178" stroke="#7C7CDE" stroke-width="2" fill="none" vector-effect="non-scaling-stroke"></path>
<path d="M487 172 L492 181 L497 172z" fill="#7C7CDE"></path>
<path d="M492 257 V322" stroke="#7C7CDE" stroke-width="2" fill="none" vector-effect="non-scaling-stroke"></path>
<path d="M487 315 L492 324 L497 315z" fill="#7C7CDE"></path>
<path d="M552 357 V216 Q552 212 548 212" stroke="#7C7CDE" stroke-width="2" fill="none" vector-effect="non-scaling-stroke"></path>
<path d="M542 212.5 L552 207 L553 217z" fill="#7C7CDE"></path>
<path d="M492 401 V466" stroke="#7C7CDE" stroke-width="2" fill="none" vector-effect="non-scaling-stroke"></path>
<path d="M487 459 L492 468 L497 459z" fill="#7C7CDE"></path>
<path d="M552 502 H577 Q582 502 582 497 V219 Q582 213 588 213 H620" stroke="#7C7CDE" stroke-width="2" fill="none" vector-effect="non-scaling-stroke"></path>
<path d="M613 208 L622 213 L613 218z" fill="#7C7CDE"></path>
<path d="M733 213 H829 Q834 213 834 218 V322" stroke="#7C7CDE" stroke-width="2" fill="none" vector-effect="non-scaling-stroke"></path>
<path d="M829 315 L834 324 L839 315z" fill="#7C7CDE"></path>
<circle cx="492" cy="248.5" r="9.3" fill="#fff" stroke="#222" stroke-width="1.2" vector-effect="non-scaling-stroke"></circle>
<circle cx="492" cy="248.5" r="7" fill="#fff" stroke="#222" stroke-width="1.2"></circle>
<circle cx="724" cy="213.5" r="9.3" fill="#fff" stroke="#222" stroke-width="1.2" vector-effect="non-scaling-stroke"></circle>
<circle cx="724" cy="213.5" r="7" fill="#fff" stroke="#222" stroke-width="1.2"></circle>
<circle cx="543" cy="357.5" r="9.3" fill="#fff" stroke="#222" stroke-width="1.2" vector-effect="non-scaling-stroke"></circle>
<circle cx="543" cy="357.5" r="7" fill="#fff" stroke="#222" stroke-width="1.2"></circle>
<circle cx="492" cy="392.5" r="9.3" fill="#fff" stroke="#222" stroke-width="1.2" vector-effect="non-scaling-stroke"></circle>
<circle cx="492" cy="392.5" r="7" fill="#fff" stroke="#222" stroke-width="1.2"></circle>
<circle cx="543" cy="502.5" r="9.3" fill="#fff" stroke="#222" stroke-width="1.2" vector-effect="non-scaling-stroke"></circle>
<circle cx="543" cy="502.5" r="7" fill="#fff" stroke="#222" stroke-width="1.2"></circle>
<circle cx="836" cy="356" r="30" fill="#555" filter="url(#blur1)"></circle>
<circle cx="833.6" cy="353.6" r="29.4" fill="#fff" stroke="#000" stroke-width="4" vector-effect="non-scaling-stroke"></circle>
<text x="834" y="359" font-size="12" font-family="Liberation Sans" text-anchor="middle" textLength="23" lengthAdjust="spacingAndGlyphs">Exit1</text>
<text stroke="#000" stroke-width="0.3" x="492" y="171" font-size="12" font-family="Liberation Sans" text-anchor="middle" fill="#000" textLength="24" lengthAdjust="spacingAndGlyphs">開始</text>
<text x="445" y="175" font-size="11" font-family="Liberation Sans" text-anchor="middle" fill="#1E8A1E" textLength="18" lengthAdjust="spacingAndGlyphs">168</text>
<text x="492" y="276" font-size="11" font-family="Liberation Sans" text-anchor="middle" fill="#1E8A1E" textLength="12" lengthAdjust="spacingAndGlyphs">24</text>
<text stroke="#000" stroke-width="0.3" x="492" y="284" font-size="12" font-family="Liberation Sans" text-anchor="middle" fill="#000" textLength="24" lengthAdjust="spacingAndGlyphs">申請</text>
<text stroke="#000" stroke-width="0.3" x="552" y="284" font-size="12" font-family="Liberation Sans" text-anchor="middle" fill="#000" textLength="24" lengthAdjust="spacingAndGlyphs">却下</text>
<text stroke="#000" stroke-width="0.3" x="582" y="357" font-size="12" font-family="Liberation Sans" text-anchor="middle" fill="#000" textLength="24" lengthAdjust="spacingAndGlyphs">決裁</text>
<text x="492" y="420" font-size="11" font-family="Liberation Sans" text-anchor="middle" fill="#1E8A1E" textLength="12" lengthAdjust="spacingAndGlyphs">24</text>
<text stroke="#000" stroke-width="0.3" x="492" y="428" font-size="12" font-family="Liberation Sans" text-anchor="middle" fill="#000" textLength="24" lengthAdjust="spacingAndGlyphs">承認</text>
<text x="562" y="512" font-size="11" font-family="Liberation Sans" text-anchor="middle" fill="#1E8A1E" textLength="12" lengthAdjust="spacingAndGlyphs">23</text>
<text x="778" y="224" font-size="11" font-family="Liberation Sans" text-anchor="middle" fill="#1E8A1E" textLength="12" lengthAdjust="spacingAndGlyphs">23</text>
<text stroke="#000" stroke-width="0.3" x="834" y="267" font-size="12" font-family="Liberation Sans" text-anchor="middle" fill="#000" textLength="24" lengthAdjust="spacingAndGlyphs">完了</text>
</g>
</svg>
<!-- palette strip -->
<svg class="a" style="left:1371px;top:72px" width="18" height="541" viewBox="1371 72 18 541">
 <path d="M1381 76 v8 l-5-4z" fill="#1A3A8A"></path>
 <path d="M1376.5 95v22M1379.5 95v22M1376.5 158v22M1379.5 158v22" stroke="#fff"></path>
 <path d="M1377.5 95v22M1380.5 95v22M1377.5 158v22M1380.5 158v22" stroke="#A8A698"></path>
 <text transform="translate(1382.5 156) rotate(-90)" font-size="12" font-weight="bold" stroke="#000" stroke-width="0.6" font-family="Liberation Sans" textLength="34" lengthAdjust="spacingAndGlyphs">パレット</text>
</svg>
<!-- sim controls -->
<div class="gb" style="left:270px;top:634px;width:73px;height:90px"></div>
<div class="t gt" style="left:278px;top:629px;width:25px"><span style="transform: scaleX(1.0417);">凡例</span></div>
<div class="a" style="left:279px;top:648px;width:14px;height:12px;background:#FFFF00;border:1px solid #000"></div>
<div class="a" style="left:279px;top:669px;width:14px;height:12px;background:#fff;border:1px solid #000"></div>
<div class="a" style="left:279px;top:691px;width:14px;height:13px;background:#007A00;border:1px solid #000"></div>
<div class="t" style="left:298px;top:647px;width:37px"><span style="transform: scaleX(1.0278);">実行中</span></div>
<div class="t" style="left:298px;top:668px;width:37px"><span style="transform: scaleX(1.0278);">待機中</span></div>
<div class="t" style="left:298px;top:690px;width:24px"><span style="transform: scaleX(1);">完了</span></div>

<div class="gb" style="left:349px;top:634px;width:185px;height:90px"></div>
<div class="t gt" style="left:356px;top:629px;width:52px"><span style="transform: scaleX(1.0833);">速度調節</span></div>
<svg class="a" style="left:360px;top:645px" width="165" height="45" viewBox="360 645 165 45">
 <g stroke="#A0A090"><path d="M369.5 651v3M405.5 651v3M441.5 651v3M476.5 651v3M513.5 651v3M369.5 679v3M405.5 679v3M441.5 679v3M476.5 679v3M513.5 679v3"></path></g>
 <rect x="364" y="665" width="153" height="1" fill="#8A8A7A"></rect><rect x="364" y="666" width="153" height="2" fill="#fff"></rect>
 <rect x="436.5" y="657.5" width="10" height="20" rx="1.5" fill="#F4F4F2" stroke="#9A9A9A"></rect>
 <rect x="436" y="657" width="11" height="3" rx="1.5" fill="#4CB85C"></rect><rect x="436" y="675" width="11" height="3" rx="1.5" fill="#4CB85C"></rect>
 <rect x="445" y="660" width="1" height="15" fill="#B8B8C0"></rect>
</svg>
<div class="t" style="left:410px;top:697px;width:59px"><span style="transform: scaleX(0.9833);">低　中　高</span></div>

<div class="gb" style="left:540px;top:634px;width:185px;height:90px"></div>
<div class="t gt" style="left:547px;top:629px;width:52px"><span style="transform: scaleX(1.0833);">進行状況</span></div>
<svg class="a" style="left:545px;top:644px" width="175" height="20" viewBox="545 644 175 20">
 <rect x="547.5" y="646.5" width="169" height="16" rx="2" fill="#fff" stroke="#808080"></rect>
</svg>
<div class="a" style="left:550px;top:649px;width:164px;height:11px;background:repeating-linear-gradient(90deg,#46C846 0 6px,#fff 6px 8px)"></div>
<div class="t" style="left:618px;top:671px;width:26px;font-weight:bold"><span style="transform: scaleX(1.0833);">完了</span></div>
<svg class="a" style="left:590px;top:692px" width="82" height="22" viewBox="590 692 82 22">
 <path d="M592.5 694v18M669.5 694v18" stroke="#D0CDBC"></path>
 <path d="M602 696l11 7-11 7z" fill="#2E63B8"></path>
 <rect x="626" y="697" width="3" height="12" fill="#8A8A8A"></rect><rect x="632" y="697" width="3" height="12" fill="#8A8A8A"></rect>
 <rect x="649" y="697" width="11" height="11" fill="#8A8A8A"></rect>
</svg>

<div class="gb" style="left:731px;top:634px;width:105px;height:90px"></div>
<div class="t gt" style="left:738px;top:629px;width:52px"><span style="transform: scaleX(1.0833);">実行日時</span></div>
<div class="t" style="left:744px;top:662px;width:79px;font-weight:bold"><span style="transform: scaleX(1.3153);">2008/07/14</span></div>

<div class="gb" style="left:841px;top:634px;width:147px;height:41px"></div>
<div class="t gt" style="left:849px;top:629px;width:118px"><span style="transform: scaleX(0.8194);">シミュレーションレポート</span></div>
<div class="a" style="left:882px;top:645px;width:64px;height:24px;border:1px solid #003C74;border-radius:3px;background:linear-gradient(#fff,#ECEBE6 85%,#D6D0C5)"></div>
<svg class="a" style="left:888px;top:648px" width="18" height="18" viewBox="0 0 18 18">
 <rect x="1" y="1" width="16" height="16" fill="#F0F0F0" stroke="#909090"></rect>
 <rect x="4" y="7" width="2" height="9" fill="#E04020"></rect><rect x="8" y="4" width="2" height="12" fill="#20A040"></rect><rect x="12" y="9" width="2" height="7" fill="#2040C0"></rect>
 <path d="M3 12l5-6 4 3 4-6" stroke="#E0A000" stroke-width="1.5" fill="none"></path>
</svg>
<div class="t" style="left:908px;top:651px;width:33px"><span style="transform: scaleX(0.9701);">表示...</span></div>

<div class="gb" style="left:841px;top:682px;width:147px;height:42px"></div>
<div class="t gt" style="left:849px;top:677px;width:128px"><span style="transform: scaleX(0.8889);">シミュレーション実行日時</span></div>
<div class="t" style="left:846px;top:698px;width:105px"><span style="transform: scaleX(0.9536);">2008/07/07 20:50:50</span></div>

<!-- bottom tabs -->
<div class="a" style="left:261px;top:733px;width:1128px;height:1px;background:#A09F8F"></div>
<div class="a" style="left:304px;top:733px;width:55px;height:17px;background:#fff;border:1px solid #A09F8F;border-top:none"></div>
<div class="a" style="left:303px;top:734px;width:1px;height:16px;background:#A09F8F"></div>
<div class="t" style="left:263px;top:736px;width:38px"><span style="transform: scaleX(0.7917);">シナリオ</span></div>
<div class="t" style="left:308px;top:736px;width:48px"><span style="transform: scaleX(1);">経費申請</span></div>
<!-- ===== PROPERTIES ===== -->
<div class="panel" style="left:257px;top:757px;width:1136px;height:213px"></div>
<div class="a" style="left:258px;top:780px;width:1134px;height:1px;background:#A09F8F"></div>
<div class="vtab" style="left:258px;top:758px;width:102px;height:23px"></div>
<div class="a" style="left:259px;top:779px;width:100px;height:2px;background:#F3F1E9"></div>
<div class="a" style="left:360px;top:758px;width:101px;height:23px;border-right:1px solid #A09F8F;border-top:1px solid #C8C5B5"></div>
<svg class="a" style="left:262px;top:762px" width="16" height="14" viewBox="0 0 16 14">
 <rect x="0.5" y="0.5" width="15" height="13" fill="#fff" stroke="#5A7AA8"></rect>
 <rect x="0.5" y="0.5" width="15" height="3" fill="#8AAAD0"></rect>
 <path d="M1 6.5h14M1 9.5h14M5.5 4v9" stroke="#9AB0D0"></path>
</svg>
<div class="t" style="left:280px;top:763px;width:56px"><span style="transform: scaleX(0.7778);">プロパティー</span></div>
<svg class="a" style="left:342px;top:763px" width="11" height="11" viewBox="0 0 11 11"><path d="M1 1l2-0 2.5 2.5 2.5-2.5 2 0 0 2-2.5 2.5 2.5 2.5 0 2-2 0-2.5-2.5-2.5 2.5-2 0 0-2 2.5-2.5-2.5-2.5z" fill="#fff" stroke="#777"></path></svg>
<div class="t" style="left:364px;top:763px;width:93px"><span style="transform: scaleX(0.9681);">Style Sheet Editor</span></div>
<!-- view toolbar -->
<div class="a" style="left:1266px;top:757px;width:23px;height:23px;border:1px solid #9AB0D0;border-radius:3px;background:#F8F8F8"></div>
<svg class="a" style="left:1266px;top:757px" width="130" height="24" viewBox="1266 757 130 24">
 <path d="M1274.5 763v12M1274.5 766.5h4M1274.5 770.5h4M1274.5 774.5h4" stroke="#5A6A8A"></path>
 <rect x="1273" y="762" width="3" height="3" fill="#5A7AB0"></rect><rect x="1278" y="765" width="4" height="3" fill="#5A7AB0"></rect><rect x="1278" y="769" width="4" height="3" fill="#5A7AB0"></rect><rect x="1278" y="773" width="4" height="3" fill="#5A7AB0"></rect>
 <path d="M1294 763h6M1294 773h6M1298 761v4l2-2zM1298 771v4l2-2z" stroke="#2A4A7A" fill="#2A4A7A"></path>
 <path d="M1302 761v16" stroke="#2A4A7A"></path>
 <path d="M1298 766h5v-3l5 5-5 5v-3h-5z" fill="#F8D060" stroke="#B08020"></path>
 <rect x="1316.5" y="763.5" width="12" height="10" fill="#EEE" stroke="#C0C0C0"></rect>
 <path d="M1318 766h9M1318 769h9" stroke="#D0D0D0"></path>
 <path d="M1340.5 762.5h9l-4.5 5z" fill="#fff" stroke="#555"></path>
</svg>
<div class="mn" style="left:1358px;top:762px"></div>
<div class="mx" style="left:1376px;top:762px"></div>
<!-- table -->
<div class="a" style="left:258px;top:781px;width:1132px;height:24px;background:#ECE9D8;border-bottom:2px solid #D4D0C0"></div>
<div class="a" style="left:711px;top:782px;width:1px;height:20px;background:#D4D0C0"></div>
<div class="a" style="left:1384px;top:784px;width:1px;height:18px;background:#D4D0C0"></div>
<div class="t" style="left:268px;top:788px;width:56px"><span style="transform: scaleX(0.7778);">プロパティー</span></div>
<div class="t" style="left:721px;top:788px;width:12px"><span style="transform: scaleX(1);">値</span></div>
<div class="wh" style="left:258px;top:805px;width:1132px;height:163px;background:#fff repeating-linear-gradient(transparent 0 14px,#EDEDED 14px 15px);background-position:0 0"></div>
<div class="a" style="left:711px;top:805px;width:1px;height:163px;background:#EDEDED"></div><div class="a" style="left:1384px;top:805px;width:1px;height:163px;background:#EDEDED"></div>
<svg class="a" style="left:266px;top:806px" width="12" height="60" viewBox="266 806 12 60">
 <rect x="267.5" y="808.5" width="8" height="8" fill="#fff" stroke="#7A8A99"></rect><path d="M269.5 812.5h4" stroke="#000"></path>
 <rect x="267.5" y="853.5" width="8" height="8" fill="#fff" stroke="#7A8A99"></rect><path d="M269.5 857.5h4" stroke="#000"></path>
</svg>
<div class="t" style="left:283px;top:806px;width:24px"><span style="transform: scaleX(1);">一般</span></div>
<div class="t" style="left:303px;top:821px;width:24px"><span style="transform: scaleX(1);">名前</span></div>
<div class="t" style="left:303px;top:836px;width:24px"><span style="transform: scaleX(1);">説明</span></div>
<div class="t" style="left:283px;top:851px;width:24px"><span style="transform: scaleX(1);">詳細</span></div>
<div class="t" style="left:303px;top:866px;width:44px"><span style="transform: scaleX(0.7333);">プロパティ</span></div>
<div class="t" style="left:715px;top:821px;width:48px"><span style="transform: scaleX(1);">経費申請</span></div>
<div class="t" style="left:715px;top:836px;width:72px"><span style="transform: scaleX(1);">経費申請処理</span></div>

<!-- ===== STATUS BAR ===== -->
<div class="a" style="left:924px;top:972px;width:1px;height:20px;background:#C5C2B2;border-right:1px solid #fff"></div>
<div class="t" style="left:933px;top:977px;width:58px"><span style="transform: scaleX(0.9667);">書込み可能</span></div>
<div class="grip" style="left:1138px;top:975px;height:15px"></div>
<script>
(function(){
document.querySelectorAll('.t').forEach(function(e){
  var w=parseFloat(e.style.width); if(!w) return;
  var s=e.firstElementChild; if(!s) return;
  s.style.transform='none';
  var n=s.getBoundingClientRect().width; if(n>0) s.style.transform='scaleX('+(w/n).toFixed(4)+')';
});
})();
</script>


</body></html>
